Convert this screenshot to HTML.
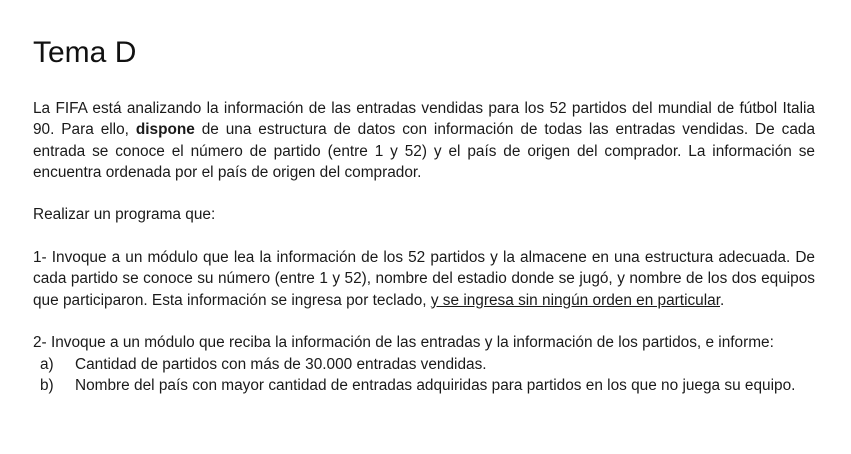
<!DOCTYPE html>
<html><head><meta charset="utf-8"><style>
body{margin:0;width:851px;height:454px;background:#fff;font-family:"Liberation Sans",sans-serif;color:#1a1a1a;overflow:hidden}
h1{position:absolute;left:33px;top:35px;margin:0;font-weight:normal;font-size:30px;line-height:36px;color:#111}
.t{position:absolute;left:33px;width:782px;font-size:15.4px;line-height:21.3px}
.l{white-space:nowrap}
.jj{text-align:justify;text-align-last:justify}
u{text-decoration:underline}
.li{position:relative}
.li b{font-weight:normal;position:absolute;left:7px}
.li span{margin-left:42px}
</style></head><body>
<h1>Tema D</h1>
<div class="t" style="top:98px">
<div class="jj">La FIFA está analizando la información de las entradas vendidas para los 52 partidos del mundial de fútbol Italia</div>
<div class="jj">90. Para ello, <b>dispone</b> de una estructura de datos con información de todas las entradas vendidas. De cada</div>
<div class="jj">entrada se conoce el número de partido (entre 1 y 52) y el país de origen del comprador. La información se</div>
<div class="l">encuentra ordenada por el país de origen del comprador.</div>
<div>&nbsp;</div>
<div class="l">Realizar un programa que:</div>
<div>&nbsp;</div>
<div class="jj">1- Invoque a un módulo que lea la información de los 52 partidos y la almacene en una estructura adecuada. De</div>
<div class="jj">cada partido se conoce su número (entre 1 y 52), nombre del estadio donde se jugó, y nombre de los dos equipos</div>
<div class="l">que participaron. Esta información se ingresa por teclado, <u>y se ingresa sin ningún orden en particular</u>.</div>
<div>&nbsp;</div>
<div class="l">2- Invoque a un módulo que reciba la información de las entradas y la información de los partidos, e informe:</div>
<div class="l li"><b>a)</b><span>Cantidad de partidos con más de 30.000 entradas vendidas.</span></div>
<div class="l li"><b>b)</b><span>Nombre del país con mayor cantidad de entradas adquiridas para partidos en los que no juega su equipo.</span></div>
</div>
</body></html>
